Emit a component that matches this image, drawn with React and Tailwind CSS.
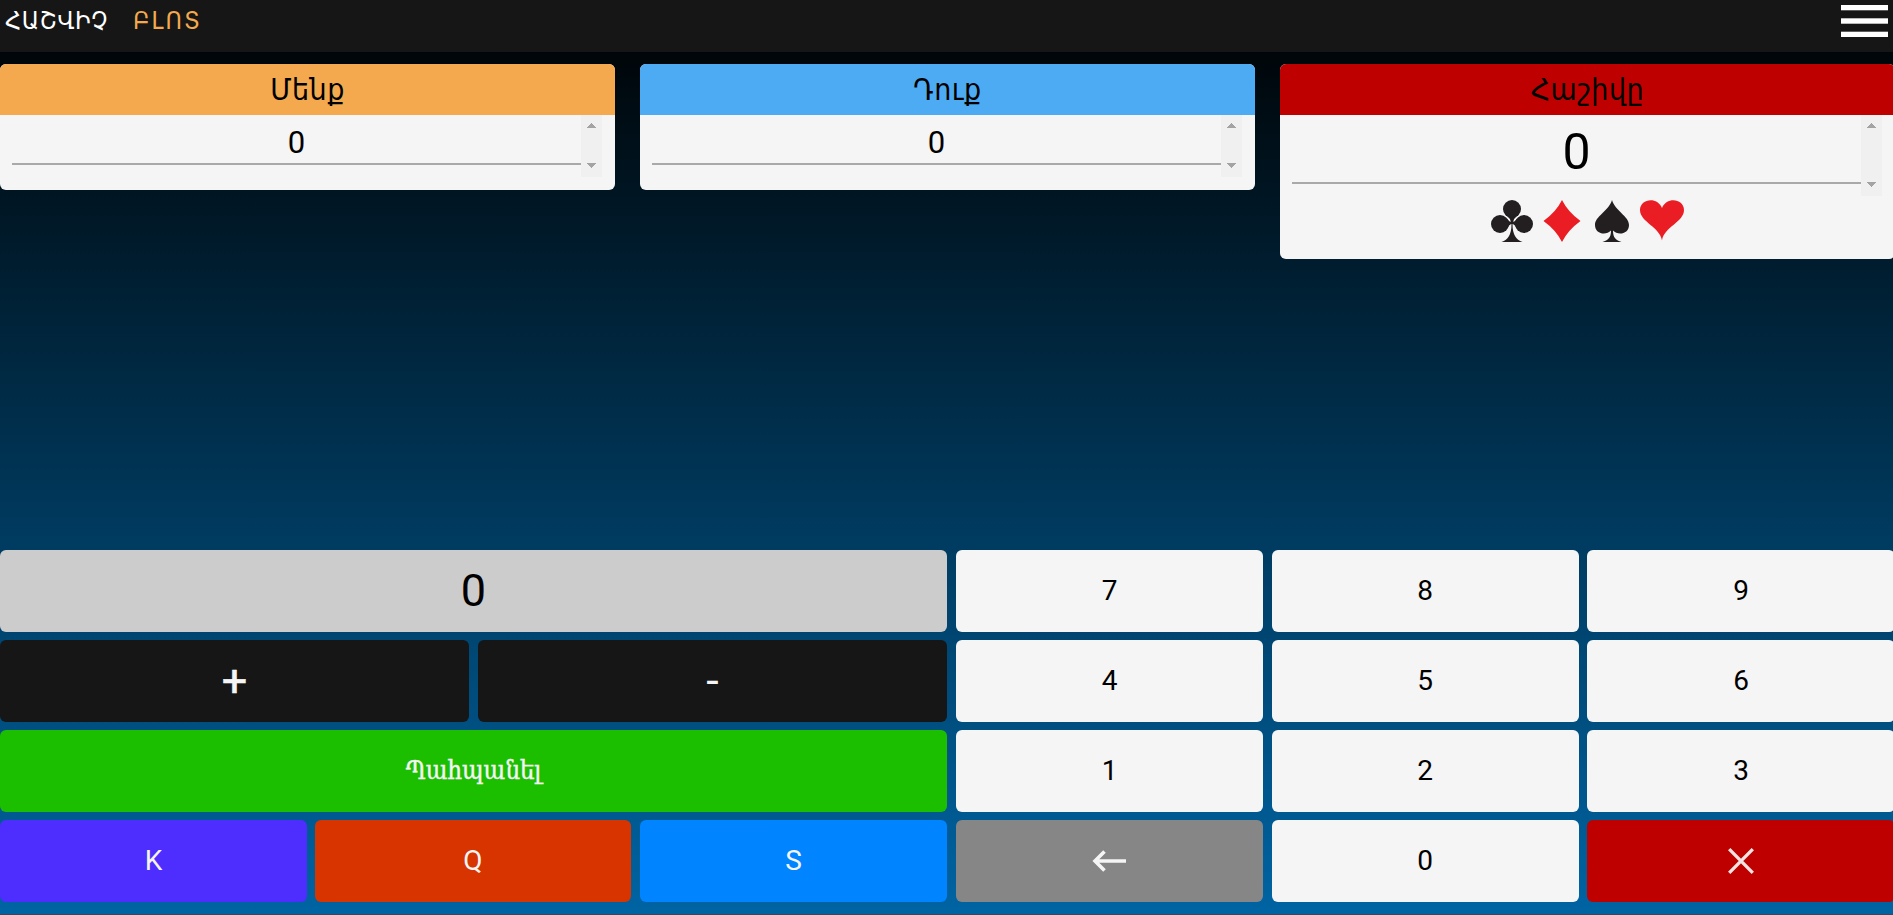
import React from "react";

const ARM = "font-['DejaVu_Sans_Condensed','DejaVu_Sans',sans-serif] [font-stretch:condensed]";

function ScrollTrack() {
  return (
    <div className="flex w-[21px] shrink-0 flex-col items-center justify-between bg-[#f0f0f0] pt-2 pb-[9px]">
      <svg width="9" height="5" viewBox="0 0 9 5" fill="#a3a3a3" shapeRendering="crispEdges"><path d="M4.500 0L9 5H0z" /></svg>
      <svg width="9" height="5" viewBox="0 0 9 5" fill="#a3a3a3" shapeRendering="crispEdges"><path d="M0 0h9L4.500 5z" /></svg>
    </div>
  );
}

function Card({ title, color, large, children }) {
  return (
    <section className="w-[615px] shrink-0 overflow-hidden rounded-md bg-[#f5f5f5]">
      <h2 className={`flex h-[51px] items-center justify-center text-black ${ARM} ${color}`}>
        <span className="pb-px text-[30px] tracking-[0.5px]">{title}</span>
      </h2>
      <div className={large ? "mr-[13px] ml-3 flex h-[81px]" : "mr-[13px] ml-3 flex h-[62px]"}>
        <div className="min-w-0 flex-1">
          <div
            className={
              large
                ? "flex h-[69px] items-center justify-center border-b-2 border-[#a9a9a9] pt-[7px] text-[50px] leading-none"
                : "flex h-[50px] items-center justify-center border-b-2 border-[#a9a9a9] pt-[7px] text-[31px] leading-none"
            }
          >
            0
          </div>
        </div>
        <ScrollTrack />
      </div>
      {children}
    </section>
  );
}

function Key({ className = "bg-[#f5f5f5] text-black", children }) {
  return (
    <button className={`flex h-[82px] items-center justify-center rounded-md text-[28px] leading-none ${className}`}>
      {children}
    </button>
  );
}

function Suits() {
  return (
    <div className="flex h-[63px] justify-center pr-[2px]">
      <svg width="50" height="50" viewBox="0 0 50 50" fill="#231f20">
        <circle cx="25" cy="13" r="9" />
        <circle cx="13" cy="28" r="9" />
        <circle cx="37" cy="28" r="9" />
        <path d="M18 18Q24 23 23.700 26Q22 25.500 20 22.500V33Q22 28.500 24.500 28Q24.500 43 14.500 46H35.500Q25.500 43 25.500 28Q28 28.500 30 33V22.500Q28 25.500 26.300 26Q26 23 32 18z" />
      </svg>
      <svg width="50" height="50" viewBox="0 0 50 50" fill="#ea1c24">
        <path d="M25 4Q31 16 43.500 25Q31 34 25 46Q19 34 6.500 25Q19 16 25 4z" />
      </svg>
      <svg width="50" height="50" viewBox="0 0 50 50" fill="#231f20">
        <path d="M25 4C28 15 42 20 42 29C42 38 31 40 26 34.500C26 42 29 44 34.500 46H15.500C21 44 24 42 24 34.500C19 40 8 38 8 29C8 20 22 15 25 4z" />
      </svg>
      <svg width="50" height="50" viewBox="0 0 50 50" fill="#ea1c24">
        <path d="M25 44.500C23 31 3 26 3 14C3 3 20 0 25 12C30 0 47 3 47 14C47 26 27 31 25 44.500z" />
      </svg>
    </div>
  );
}

export default function App() {
  return (
    <div className="flex h-[915px] w-full flex-col overflow-hidden bg-linear-to-b/srgb from-black to-[#0064a3] font-[Roboto,sans-serif]">
      <header className={`flex h-[52px] shrink-0 items-start justify-between bg-[#161616] ${ARM}`}>
        <nav className="flex gap-[25px] pt-[6px] pl-[5px] leading-[30px]">
          <a className="text-[25px] tracking-[0.7px] text-white">ՀԱՇՎԻՉ</a>
          <a className="text-[25px] tracking-[2px] text-[#f4a94e]">ԲԼՈՏ</a>
        </nav>
        <svg className="mt-[5px] mr-[5px]" width="47" height="32" viewBox="0 0 47 32" fill="#fff">
          <rect width="47" height="5.300" />
          <rect y="13.300" width="47" height="5.400" />
          <rect y="26.700" width="47" height="5.300" />
        </svg>
      </header>

      <div className="mt-3 flex shrink-0 items-start gap-[25px]">
        <Card title="Մենք" color="bg-[#f4a94e]"><div className="h-[13px]" /></Card>
        <Card title="Դուք" color="bg-[#4cabf2]"><div className="h-[13px]" /></Card>
        <Card title="Հաշիվը" color="bg-[#be0000]" large><Suits /></Card>
      </div>

      <div className="mt-auto mb-3 flex shrink-0 gap-[9px]">
        <div className="flex w-[947px] shrink-0 flex-col gap-2">
          <div className="flex h-[82px] items-center justify-center rounded-md bg-[#ccc] pb-[2px] text-[45px] leading-none text-black">0</div>
          <div className="grid grid-cols-2 gap-[9px]">
            <Key className="bg-[#161616] pb-[2px] text-[#f5f5f5]"><span className="text-[45px] [-webkit-text-stroke:0.5px_#f5f5f5]">+</span></Key>
            <Key className="bg-[#161616] pb-[2px] text-[#f5f5f5]"><span className="text-[45px]">-</span></Key>
          </div>
          <Key className="bg-[#1cbf00] text-[#f5f5f5]">
            <span className="font-['DejaVu_Serif_Condensed','DejaVu_Serif',serif] text-[25.5px] [font-stretch:condensed] [-webkit-text-stroke:0.4px_#f5f5f5]">Պահպանել</span>
          </Key>
          <div className="grid grid-cols-[307px_316px_1fr] gap-2">
            <Key className="bg-[#4e2dff] text-[#f5f5f5]">K</Key>
            <Key className="bg-[#d83400] text-[#f5f5f5]">Q</Key>
            <Key className="ml-px bg-[#0084ff] text-[#f5f5f5]">S</Key>
          </div>
        </div>
        <div className="grid shrink-0 grid-cols-[307px_307px_308px] gap-x-[8.500px] gap-y-2">
          <Key>7</Key><Key>8</Key><Key>9</Key>
          <Key>4</Key><Key>5</Key><Key>6</Key>
          <Key>1</Key><Key>2</Key><Key>3</Key>
          <Key className="bg-[#868686] pr-px">
            <svg width="34" height="22" viewBox="0 0 34 22" fill="none" stroke="#f5f5f5" strokeWidth="3.600"><path d="M34 11H3M12.500 1.500L3 11l9.500 9.500" /></svg>
          </Key>
          <Key>0</Key>
          <Key className="bg-[#be0000]">
            <svg width="26" height="26" viewBox="0 0 26 26" fill="none" stroke="#f0e4e4" strokeWidth="3.300"><path d="M1.200 1.200l23.600 23.600M24.800 1.200L1.200 24.800" /></svg>
          </Key>
        </div>
      </div>
      <div className="h-px shrink-0 bg-[#3a4560]" />
    </div>
  );
}
